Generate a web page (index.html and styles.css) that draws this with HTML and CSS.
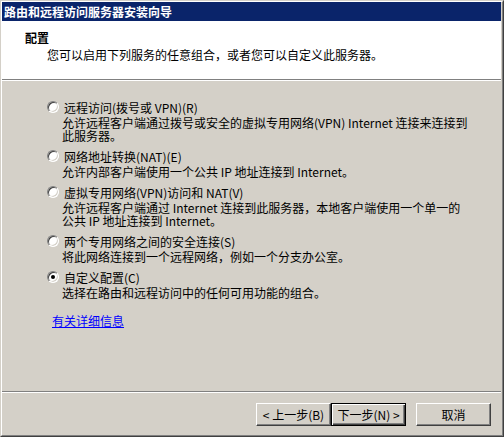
FILE: index.html
```html
<!DOCTYPE html>
<html lang="zh-CN">
<head>
    <meta charset="UTF-8">
    <title>路由和远程访问服务器安装向导</title>
    <link rel="stylesheet" href="styles.css">
</head>
<body>
    <div class="window">
        <div class="frame">
            <div class="caption">路由和远程访问服务器安装向导</div>

            <div class="header">
                <div class="header-title">配置</div>
                <div class="header-sub">您可以启用下列服务的任意组合，或者您可以自定义此服务器。</div>
            </div>

            <div class="content">
                <div class="option">
                    <div class="option-label"><span class="radio"></span><span>远程访问(拨号或 VPN)(R)</span></div>
                    <div class="option-desc">允许远程客户端通过拨号或安全的虚拟专用网络(VPN) Internet 连接来连接到<br>此服务器。</div>
                </div>
                <div class="option">
                    <div class="option-label"><span class="radio"></span><span>网络地址转换(NAT)(E)</span></div>
                    <div class="option-desc">允许内部客户端使用一个公共 IP 地址连接到 Internet。</div>
                </div>
                <div class="option">
                    <div class="option-label"><span class="radio"></span><span>虚拟专用网络(VPN)访问和 NAT(V)</span></div>
                    <div class="option-desc">允许远程客户端通过 Internet 连接到此服务器，本地客户端使用一个单一的<br>公共 IP 地址连接到 Internet。</div>
                </div>
                <div class="option">
                    <div class="option-label"><span class="radio"></span><span>两个专用网络之间的安全连接(S)</span></div>
                    <div class="option-desc">将此网络连接到一个远程网络，例如一个分支办公室。</div>
                </div>
                <div class="option">
                    <div class="option-label"><span class="radio radio-checked"></span><span>自定义配置(C)</span></div>
                    <div class="option-desc">选择在路由和远程访问中的任何可用功能的组合。</div>
                </div>

                <a class="more-link" href="#">有关详细信息</a>
            </div>

            <div class="footer">
                <button class="btn">&lt; 上一步(B)</button>
                <button class="btn btn-default">下一步(N) &gt;</button>
                <button class="btn btn-cancel">取消</button>
            </div>
        </div>
    </div>
</body>
</html>
```

FILE: styles.css
```css
/* Windows 2000 style wizard */
body {
    margin: 0;
    font-family: "Noto Sans CJK SC", "Noto Sans", sans-serif;
    font-size: 12px;
    line-height: 13px;
    color: #000;
    background: #d4d0c8;
}

.window {
    width: 504px;
    height: 437px;
    box-sizing: border-box;
    border: 1px solid;
    border-color: #d4d0c8 #404040 #404040 #d4d0c8;
    background: #d4d0c8;
}

.frame {
    height: 100%;
    box-sizing: border-box;
    border: 1px solid;
    border-color: #fff #808080 #808080 #fff;
    padding: 0 1px 1px 0;
    display: flex;
    flex-direction: column;
}

.caption {
    height: 19px;
    line-height: 19px;
    padding-left: 2px;
    background: #0a246a;
    color: #fff;
    font-weight: bold;
}

.header {
    height: 59px;
    box-sizing: border-box;
    background: #fff;
    padding: 10px 0 0 23px;
    border-bottom: 1px solid #808080;
}

.header-title {
    font-weight: bold;
}

.header-sub {
    margin-top: 4px;
    padding-left: 22px;
}

.content {
    flex: 1;
    border-top: 1px solid #fff;
    border-bottom: 1px solid #808080;
    padding: 20px 0 0 45px;
}

.option {
    margin-bottom: 8px;
}

.option-label {
    display: flex;
    align-items: flex-start;
    white-space: nowrap;
}

.radio {
    flex: none;
    position: relative;
    width: 12px;
    height: 12px;
    margin-right: 5px;
    box-sizing: border-box;
    border-radius: 50%;
    background: #fff;
    border: 1px solid;
    border-color: #808080 #fff #fff #808080;
    box-shadow: inset 1px 1px #404040, inset -1px -1px #d4d0c8;
}

.radio-checked::after {
    content: "";
    position: absolute;
    left: 3px;
    top: 3px;
    width: 4px;
    height: 4px;
    border-radius: 50%;
    background: #000;
}

.option-desc {
    margin: 2px 0 0 15px;
    white-space: nowrap;
}

.more-link {
    display: inline-block;
    margin: 7px 0 0 5px;
    color: #0000ff;
    text-decoration: underline;
}

.footer {
    display: flex;
    justify-content: flex-end;
    border-top: 1px solid #fff;
    padding: 10px 10px 8px 0;
}

.btn {
    width: 75px;
    height: 23px;
    padding: 0;
    font: inherit;
    color: #000;
    background: #d4d0c8;
    border: 1px solid;
    border-color: #fff #404040 #404040 #fff;
    box-shadow: inset -1px -1px #808080;
}

.btn-default {
    border-color: #000;
    box-shadow: inset 1px 1px #fff, inset -1px -1px #404040, inset -2px -2px #808080;
}

.btn-cancel {
    margin-left: 10px;
}
```
